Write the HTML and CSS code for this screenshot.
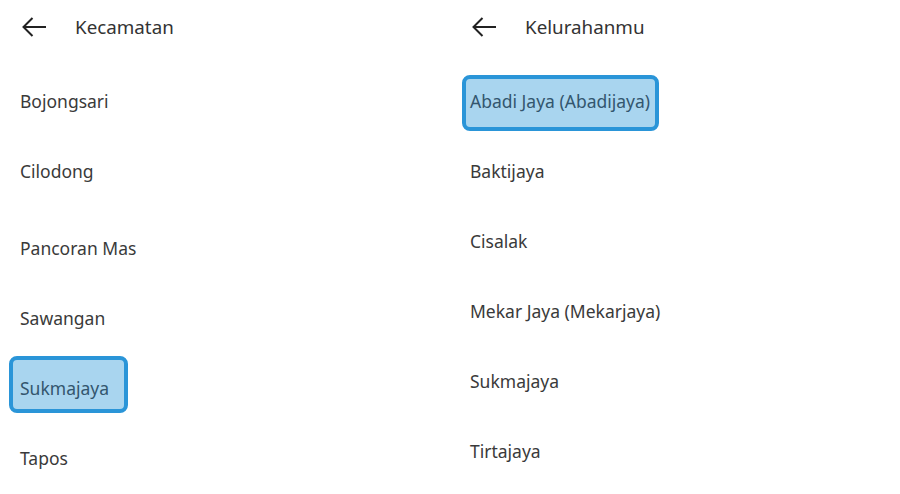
FILE: index.html
```html
<!DOCTYPE html>
<html lang="id">
<head>
<meta charset="utf-8">
<title>Kecamatan</title>
<link rel="stylesheet" href="styles.css">
</head>
<body>
<div class="page">
  <section class="pane">
    <header class="bar">
      <svg class="back" viewBox="0 0 24 20" width="24" height="20" aria-hidden="true"><path d="M1.5 10H24M10.5 1L1.5 10l9 9" fill="none" stroke="#222" stroke-width="2"/></svg>
      <h1 class="title">Kecamatan</h1>
    </header>
    <ul class="list">
      <li class="row"><span class="label">Bojongsari</span></li>
      <li class="row"><span class="label">Cilodong</span></li>
      <li class="row row-shift"><span class="label">Pancoran Mas</span></li>
      <li class="row"><span class="label">Sawangan</span></li>
      <li class="row row-top"><span class="label sel sel-left">Sukmajaya</span></li>
      <li class="row"><span class="label">Tapos</span></li>
    </ul>
  </section>
  <section class="pane">
    <header class="bar">
      <svg class="back" viewBox="0 0 24 20" width="24" height="20" aria-hidden="true"><path d="M1.5 10H24M10.5 1L1.5 10l9 9" fill="none" stroke="#222" stroke-width="2"/></svg>
      <h1 class="title">Kelurahanmu</h1>
    </header>
    <ul class="list">
      <li class="row row-top"><span class="label sel sel-right">Abadi Jaya (Abadijaya)</span></li>
      <li class="row"><span class="label">Baktijaya</span></li>
      <li class="row"><span class="label">Cisalak</span></li>
      <li class="row"><span class="label">Mekar Jaya (Mekarjaya)</span></li>
      <li class="row"><span class="label">Sukmajaya</span></li>
      <li class="row"><span class="label">Tirtajaya</span></li>
    </ul>
  </section>
</div>
</body>
</html>
```

FILE: styles.css
```css
* { box-sizing: border-box; }
html, body { margin: 0; padding: 0; background: #fff; }
body {
  font-family: "Noto Sans", "Open Sans", sans-serif;
  color: #3a3a3a;
  width: 900px;
  height: 494px;
  overflow: hidden;
}
.page { display: flex; }
.pane { width: 450px; }
.bar {
  height: 54px;
  display: flex;
  align-items: center;
  padding-left: 22px;
}
.back { display: block; flex: none; }
.title {
  margin: 0 0 0 29px;
  font-size: 18.8px;
  font-weight: 400;
  color: #333;
  line-height: 24px;
}
.list {
  list-style: none;
  margin: 12px 0 0;
  padding: 0;
}
.row {
  height: 70px;
  display: flex;
  align-items: center;
  padding-left: 20px;
}
.row-shift { margin-top: 7px; }
.label {
  font-size: 17.5px;
  line-height: 24px;
}
.row-top { align-items: flex-start; }
.sel {
  display: block;
  border: 4px solid #2a95d8;
  border-radius: 8px;
  background: #a9d5ef;
  color: #33566e;
}
.sel-left {
  margin: 3px 0 0 -11px;
  width: 119px;
  height: 57px;
  padding: 16px 0 9px 7px;
}
.sel-right {
  margin: 9px 0 0 -8px;
  width: 197px;
  height: 56px;
  padding: 10px 0 14px 4px;
}
```
